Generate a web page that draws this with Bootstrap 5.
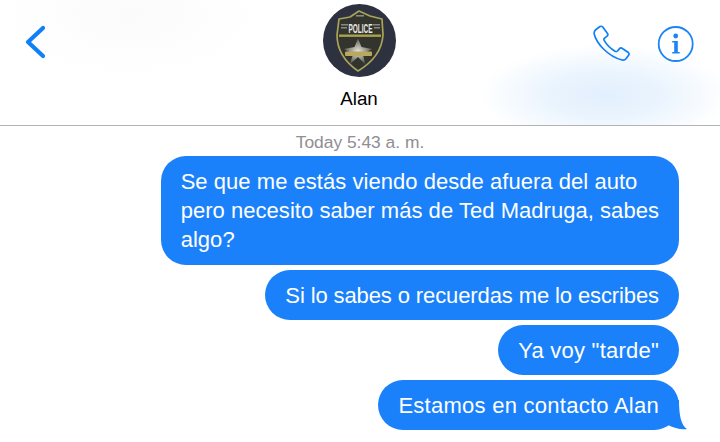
<!doctype html>
<html lang="es">
<head>
<meta charset="utf-8">
<title>Mensajes</title>
<link href="https://cdn.jsdelivr.net/npm/bootstrap@5.3.0/dist/css/bootstrap.min.css" rel="stylesheet">
<style>
html,body{height:442px;overflow:hidden;background:#fff;}
body{font-family:"Liberation Sans",Arial,sans-serif;color:#000;}
.top-head{height:126px;border-bottom:1px solid #b3b3b3;padding:4px 26px 0 24px;
 background:
  radial-gradient(ellipse 125px 50px at 605px 95px,#e2effd 0%,#eaf4fe 45%,rgba(255,255,255,0) 100%),
  radial-gradient(ellipse 130px 60px at 130px 15px,#fbfbfb 0%,rgba(255,255,255,0) 100%),#fff;}
.side-l{width:299px;padding-top:20px;}
.mid-c{width:74px;margin-left:-1px;}
.side-r{flex:1;padding-top:21px;gap:26px;}
.who{font-size:18.8px;line-height:22px;margin-top:11px;}
.stamp{color:#8e8e93;font-size:17.4px;line-height:20px;margin:6px 0 4px;}
.thread{padding-right:41px;gap:5px;}
.bub{background:#1b81fb;color:#fff;border-radius:25px;font-size:22px;line-height:29px;padding:11px 20px 10px 20px;position:relative;}
.bub-a{padding-bottom:11px;letter-spacing:.04px;}
.bub-b{letter-spacing:-.11px;}
.bub-c{letter-spacing:.23px;}
.bub-last{letter-spacing:.26px;}
.bub-last::after{content:"";position:absolute;right:-8px;bottom:0;width:19px;height:30px;background:#1b81fb;clip-path:path("M0 0 L11 0 C11 15 13 25 19 29 C13 30 6 28 0 25 Z");}
.pol{font-weight:700;}
</style>
</head>
<body>
<header class="top-head d-flex align-items-start">
  <div class="side-l">
    <svg width="22" height="36" viewBox="0 0 22 36"><path d="M19 4 L4 18 L19 32" fill="none" stroke="#1080f6" stroke-width="4.2" stroke-linecap="round" stroke-linejoin="round"/></svg>
  </div>
  <div class="mid-c d-flex flex-column align-items-center">
    <svg width="73" height="73" viewBox="0 0 73 73">
      <defs>
        <radialGradient id="st" cx="50%" cy="50%" r="50%"><stop offset="0" stop-color="#e6e4da"/><stop offset="1" stop-color="#5f5e54"/></radialGradient>
      </defs>
      <circle cx="36.5" cy="36.5" r="36.5" fill="#2d3140"/>
      <path d="M16 15 L27 13 L36 7 L47 12 L59 15 L60 31 C59 46 50 58 35 67 C22 58 14 46 14 31 Z" fill="#34342f" stroke="#a8a45a" stroke-width="1.7" stroke-linejoin="round"/>
      <rect x="33" y="11" width="8" height="1.6" fill="#8c8a78"/>
      <rect x="18" y="20" width="7" height="1.5" fill="#8c8a7e"/><rect x="18" y="23" width="6" height="1.5" fill="#8c8a7e"/>
      <rect x="50" y="20" width="7" height="1.5" fill="#8c8a7e"/><rect x="51" y="23" width="6" height="1.5" fill="#8c8a7e"/>
      <text x="37.500" y="28.800" text-anchor="middle" class="pol" font-size="12" fill="#e8e8e2" textLength="24" lengthAdjust="spacingAndGlyphs">POLICE</text>
      <rect x="16" y="30.500" width="42" height="2.4" fill="#a8a24c"/>
      <path d="M35 34.500 L38.500 43 L49 45 L40 50 L42 60 L35 53 L27 60 L30 50 L21 45 L31.500 43 Z" fill="url(#st)"/>
      <rect x="22" y="47.500" width="27" height="4.500" rx="1" fill="#b8a95c"/>
    </svg>
    <div class="who">Alan</div>
  </div>
  <div class="side-r d-flex justify-content-end align-items-start">
    <svg width="38" height="38" viewBox="0 0 38 38"><path d="M3 4.5 L7 1.5 Q8.5 .8 9.8 2 L14.5 8.5 Q15.4 10 14 11.2 L11.3 13.3 Q10.5 14.2 11.3 15.6 Q15 22 22 26.2 Q23.5 27 24.5 26 L26.5 23.6 Q27.6 22.4 29 23.2 L35.3 27.5 Q36.7 28.8 35.6 30.2 L33 33.8 Q31.5 35.5 29 35 Q19 32.5 10.5 24 Q3 16.5 1.2 9 Q.8 6 3 4.5 Z" fill="none" stroke="#1080f6" stroke-width="1.7" stroke-linejoin="round"/></svg>
    <svg width="37" height="38" viewBox="0 0 37 38"><circle cx="18.700" cy="19" r="17" fill="none" stroke="#1c85f5" stroke-width="1.8"/><circle cx="18.700" cy="11" r="2.400" fill="#1c85f5"/><path d="M15.200 16 H20.800 V27 H22.700 V28.500 H15.200 V27 H17.200 V17.500 H15.200 Z" fill="#1c85f5"/></svg>
  </div>
</header>
<p class="stamp text-center">Today 5:43 a. m.</p>
<main class="thread d-flex flex-column align-items-end">
  <div class="bub bub-a">Se que me estás viendo desde afuera del auto<br>pero necesito saber más de Ted Madruga, sabes<br>algo?</div>
  <div class="bub bub-b">Si lo sabes o recuerdas me lo escribes</div>
  <div class="bub bub-c">Ya voy "tarde"</div>
  <div class="bub bub-last">Estamos en contacto Alan</div>
</main>
<script src="https://cdn.jsdelivr.net/npm/bootstrap@5.3.0/dist/js/bootstrap.bundle.min.js"></script>
</body>
</html>
